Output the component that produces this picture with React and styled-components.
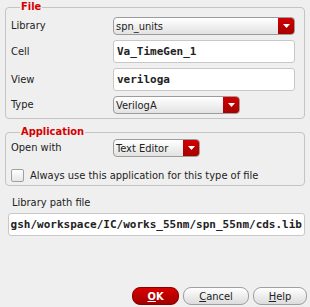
import styled, { createGlobalStyle } from "styled-components";

const GlobalStyle = createGlobalStyle`
  html, body {
    margin: 0;
    padding: 0;
    background: #efefef;
  }
  body {
    font-family: "DejaVu Sans Condensed", "DejaVu Sans", sans-serif;
    font-stretch: condensed;
    font-size: 11px;
    color: #222;
  }
`;

const App = () => {
  return (
    <Dialog>
      <GlobalStyle />

      {/* FILE */}
      <Group>
        <Legend>File</Legend>
        <FormGrid>
          <Label>Library</Label>
          <Combo>
            <span>spn_units</span>
            <Arrow />
          </Combo>
          <Label>Cell</Label>
          <TextInput>Va_TimeGen_1</TextInput>
          <Label>View</Label>
          <TextInput>veriloga</TextInput>
          <Label>Type</Label>
          <Combo $width="127px">
            <span>VerilogA</span>
            <Arrow />
          </Combo>
        </FormGrid>
      </Group>

      {/* APPLICATION */}
      <Group $spaced>
        <Legend>Application</Legend>
        <FormGrid>
          <Label>Open with</Label>
          <Combo $width="87px">
            <span>Text Editor</span>
            <Arrow />
          </Combo>
        </FormGrid>
        <CheckRow>
          <CheckBox />
          <span>Always use this application for this type of file</span>
        </CheckRow>
      </Group>

      {/* PATH */}
      <PathLabel>Library path file</PathLabel>
      <PathInput>
        <span>gsh/workspace/IC/works_55nm/spn_55nm/cds.lib</span>
      </PathInput>

      {/* BUTTONS */}
      <Buttons>
        <Button $primary>
          <u>O</u>K
        </Button>
        <Button $width="66px">
          <u>C</u>ancel
        </Button>
        <Button $width="54px">
          <u>H</u>elp
        </Button>
      </Buttons>
    </Dialog>
  );
};

const Arrow = () => (
  <ArrowBox>
    <svg width="7" height="4" viewBox="0 0 7 4">
      <path d="M0 0 L7 0 L3.5 4 Z" fill="#fff" />
    </svg>
  </ArrowBox>
);

const Dialog = styled.div`
  width: 310px;
  height: 307px;
  display: flex;
  flex-direction: column;
  box-sizing: border-box;
`;

const Group = styled.fieldset`
  margin: ${(p) => (p.$spaced ? "6px" : "0")} 5px 0 5px;
  padding: ${(p) => (p.$spaced ? "0 9px 3px 5px" : "3px 9px 4px 5px")};
  border: 1px solid #c4c4c4;
  border-radius: 4px;
  min-width: 0;
`;

const Legend = styled.legend`
  font-weight: bold;
  color: #d40000;
  font-size: 11px;
  line-height: 14px;
  height: 14px;
  padding: 0 1px;
  margin-left: 9px;
`;

const FormGrid = styled.div`
  display: grid;
  grid-template-columns: 102px 1fr;
  row-gap: 5px;
  align-items: center;
`;

const Label = styled.div`
  line-height: 14px;
`;

const Combo = styled.div`
  width: ${(p) => p.$width || "auto"};
  height: 18px;
  box-sizing: border-box;
  display: flex;
  align-items: center;
  justify-content: space-between;
  border: 1px solid #9c9c9c;
  border-radius: 4px;
  background: linear-gradient(#ffffff, #e2e2e2);
  overflow: hidden;

  span {
    padding-left: 2px;
    white-space: nowrap;
  }
`;

const ArrowBox = styled.div`
  flex: none;
  width: 16px;
  height: 100%;
  display: flex;
  align-items: center;
  justify-content: center;
  background: linear-gradient(#d00000, #a60000);
`;

const TextInput = styled.div`
  height: 23px;
  box-sizing: border-box;
  border: 1px solid #c8c8c8;
  border-radius: 3px;
  background: #fff;
  display: flex;
  align-items: center;
  padding-left: 3px;
  font-family: "DejaVu Sans Mono", monospace;
  font-stretch: normal;
  font-weight: bold;
  font-size: 11px;
`;

const CheckRow = styled.div`
  display: flex;
  align-items: center;
  gap: 6px;
  margin-top: 12px;
  line-height: 13px;
`;

const CheckBox = styled.div`
  flex: none;
  width: 13px;
  height: 13px;
  box-sizing: border-box;
  border: 1px solid #a0a0a0;
  border-radius: 2px;
  background: linear-gradient(#ffffff, #e6e6e6);
`;

const PathLabel = styled.div`
  margin: 10px 0 0 12px;
  line-height: 14px;
`;

const PathInput = styled.div`
  margin: 3px 5px 0 8px;
  height: 23px;
  box-sizing: border-box;
  border: 1px solid #c8c8c8;
  border-radius: 3px;
  background: #fff;
  display: flex;
  align-items: center;
  justify-content: flex-end;
  padding-right: 2px;
  font-family: "DejaVu Sans Mono", monospace;
  font-stretch: normal;
  font-weight: bold;
  font-size: 11px;
  white-space: nowrap;
  overflow: hidden;
`;

const Buttons = styled.div`
  margin-top: auto;
  margin-bottom: 2px;
  display: flex;
  justify-content: flex-end;
  gap: 4px;
  padding-right: 3px;
`;

const Button = styled.div`
  width: ${(p) => p.$width || "47px"};
  height: 18px;
  box-sizing: border-box;
  border-radius: 8px;
  display: flex;
  align-items: center;
  justify-content: center;
  border: 1px solid ${(p) => (p.$primary ? "#8a0000" : "#a0a0a0")};
  background: ${(p) =>
    p.$primary
      ? "linear-gradient(#d80000, #a00000)"
      : "linear-gradient(#ffffff, #dcdcdc)"};
  color: ${(p) => (p.$primary ? "#fff" : "#222")};
  font-weight: ${(p) => (p.$primary ? "bold" : "normal")};
`;

export default App;
